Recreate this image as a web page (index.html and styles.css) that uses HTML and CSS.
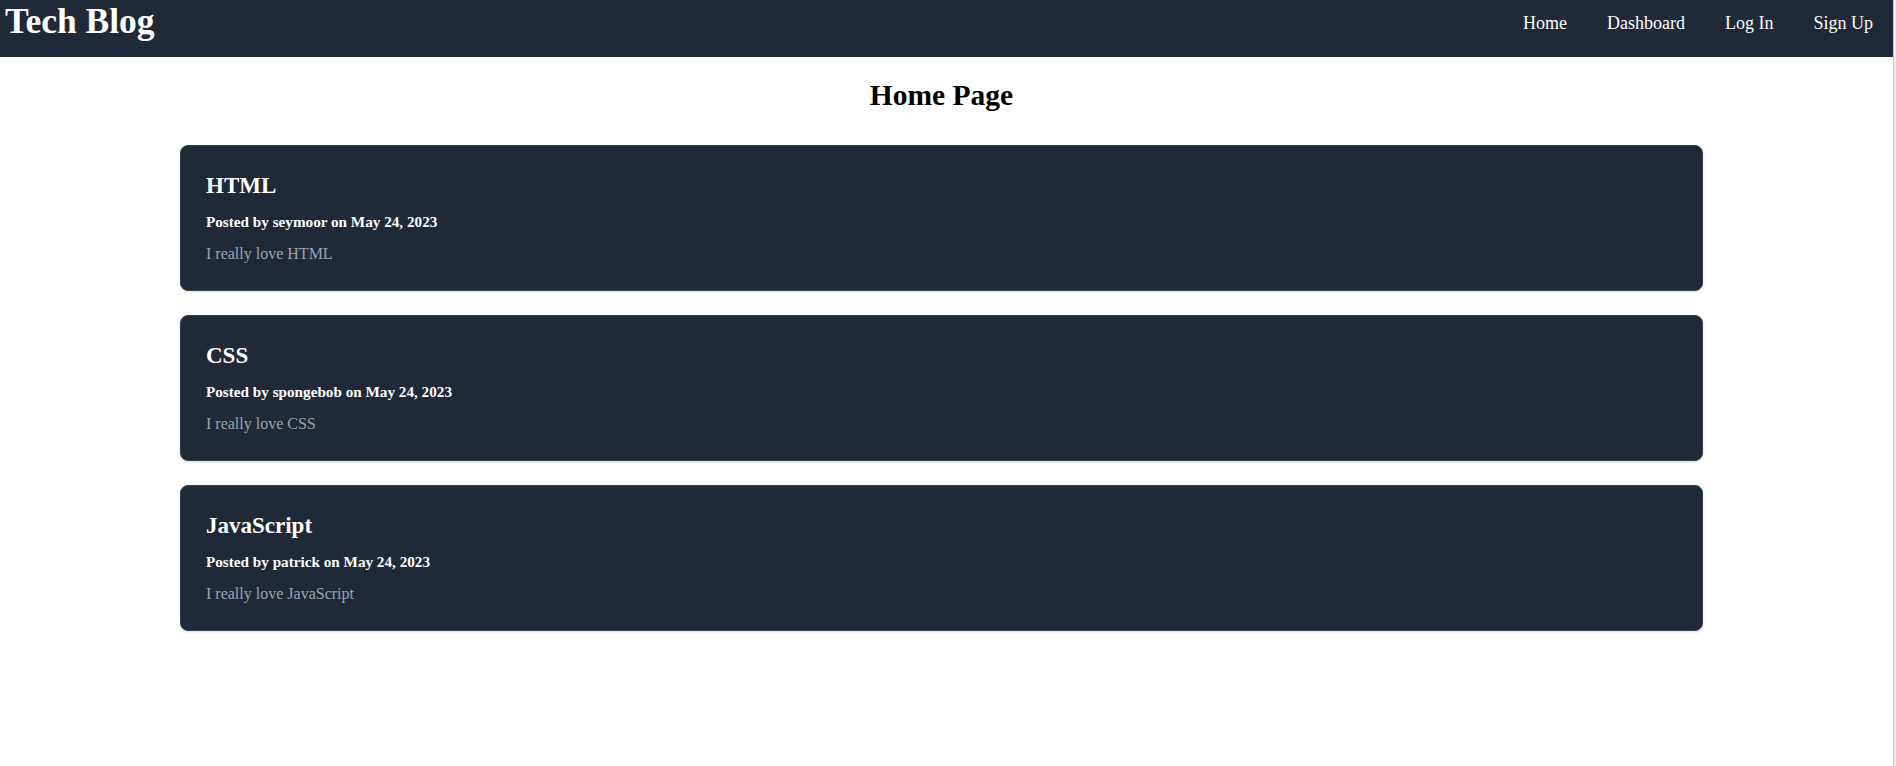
FILE: index.html
```html
<!DOCTYPE html>
<html lang="en">
<head>
<meta charset="utf-8">
<title>Tech Blog</title>
<link rel="stylesheet" href="styles.css">
</head>
<body>
<header class="site-header">
  <a class="logo" href="#">Tech Blog</a>
  <nav class="nav">
    <a class="nav-link" href="#">Home</a>
    <a class="nav-link" href="#">Dashboard</a>
    <a class="nav-link" href="#">Log In</a>
    <a class="nav-link" href="#">Sign Up</a>
  </nav>
</header>
<main class="content">
  <h1 class="page-title">Home Page</h1>
  <article class="post-card">
    <h2 class="post-title">HTML</h2>
    <p class="post-meta">Posted by seymoor on May 24, 2023</p>
    <p class="post-body">I really love HTML</p>
  </article>
  <article class="post-card">
    <h2 class="post-title">CSS</h2>
    <p class="post-meta">Posted by spongebob on May 24, 2023</p>
    <p class="post-body">I really love CSS</p>
  </article>
  <article class="post-card">
    <h2 class="post-title">JavaScript</h2>
    <p class="post-meta">Posted by patrick on May 24, 2023</p>
    <p class="post-body">I really love JavaScript</p>
  </article>
</main>
</body>
</html>
```
FILE: styles.css
```css
html {
  background: #ececec;
}
body {
  margin: 0 2px 0 0;
  border-right: 1px solid #cbcbcb;
  background: #ffffff;
  min-height: 100vh;
  font-family: "Liberation Serif", "Times New Roman", serif;
  color: #000;
}
.site-header {
  display: flex;
  justify-content: space-between;
  align-items: flex-start;
  height: 57px;
  background: #1f2937;
}
.logo {
  display: block;
  padding: 1px 0 0 5px;
  font-size: 35.5px;
  line-height: 40px;
  font-weight: bold;
  color: #ffffff;
  text-decoration: none;
}
.nav {
  display: flex;
}
.nav-link {
  display: block;
  padding: 12px 20px;
  font-size: 18px;
  line-height: 22px;
  color: #ffffff;
  text-decoration: none;
}
.content {
  margin: 0 190px 0 180px;
  padding-bottom: 40px;
}
.page-title {
  margin: 21px 0 33px;
  font-size: 29.5px;
  line-height: 34px;
  font-weight: bold;
  text-align: center;
}
.post-card {
  margin-bottom: 24px;
  padding: 26px 25px 26px;
  background: #1f2937;
  border: 1px solid #374151;
  border-radius: 8px;
  box-shadow: 0 1px 3px rgba(0, 0, 0, 0.15);
}
.post-title {
  margin: 0;
  font-size: 23px;
  line-height: 28px;
  font-weight: bold;
  color: #ffffff;
}
.post-meta {
  margin: 12px 0 0;
  font-size: 15.2px;
  line-height: 20px;
  font-weight: bold;
  color: #ffffff;
}
.post-body {
  margin: 12px 0 0;
  font-size: 16px;
  line-height: 20px;
  color: #9ca3af;
}
```
